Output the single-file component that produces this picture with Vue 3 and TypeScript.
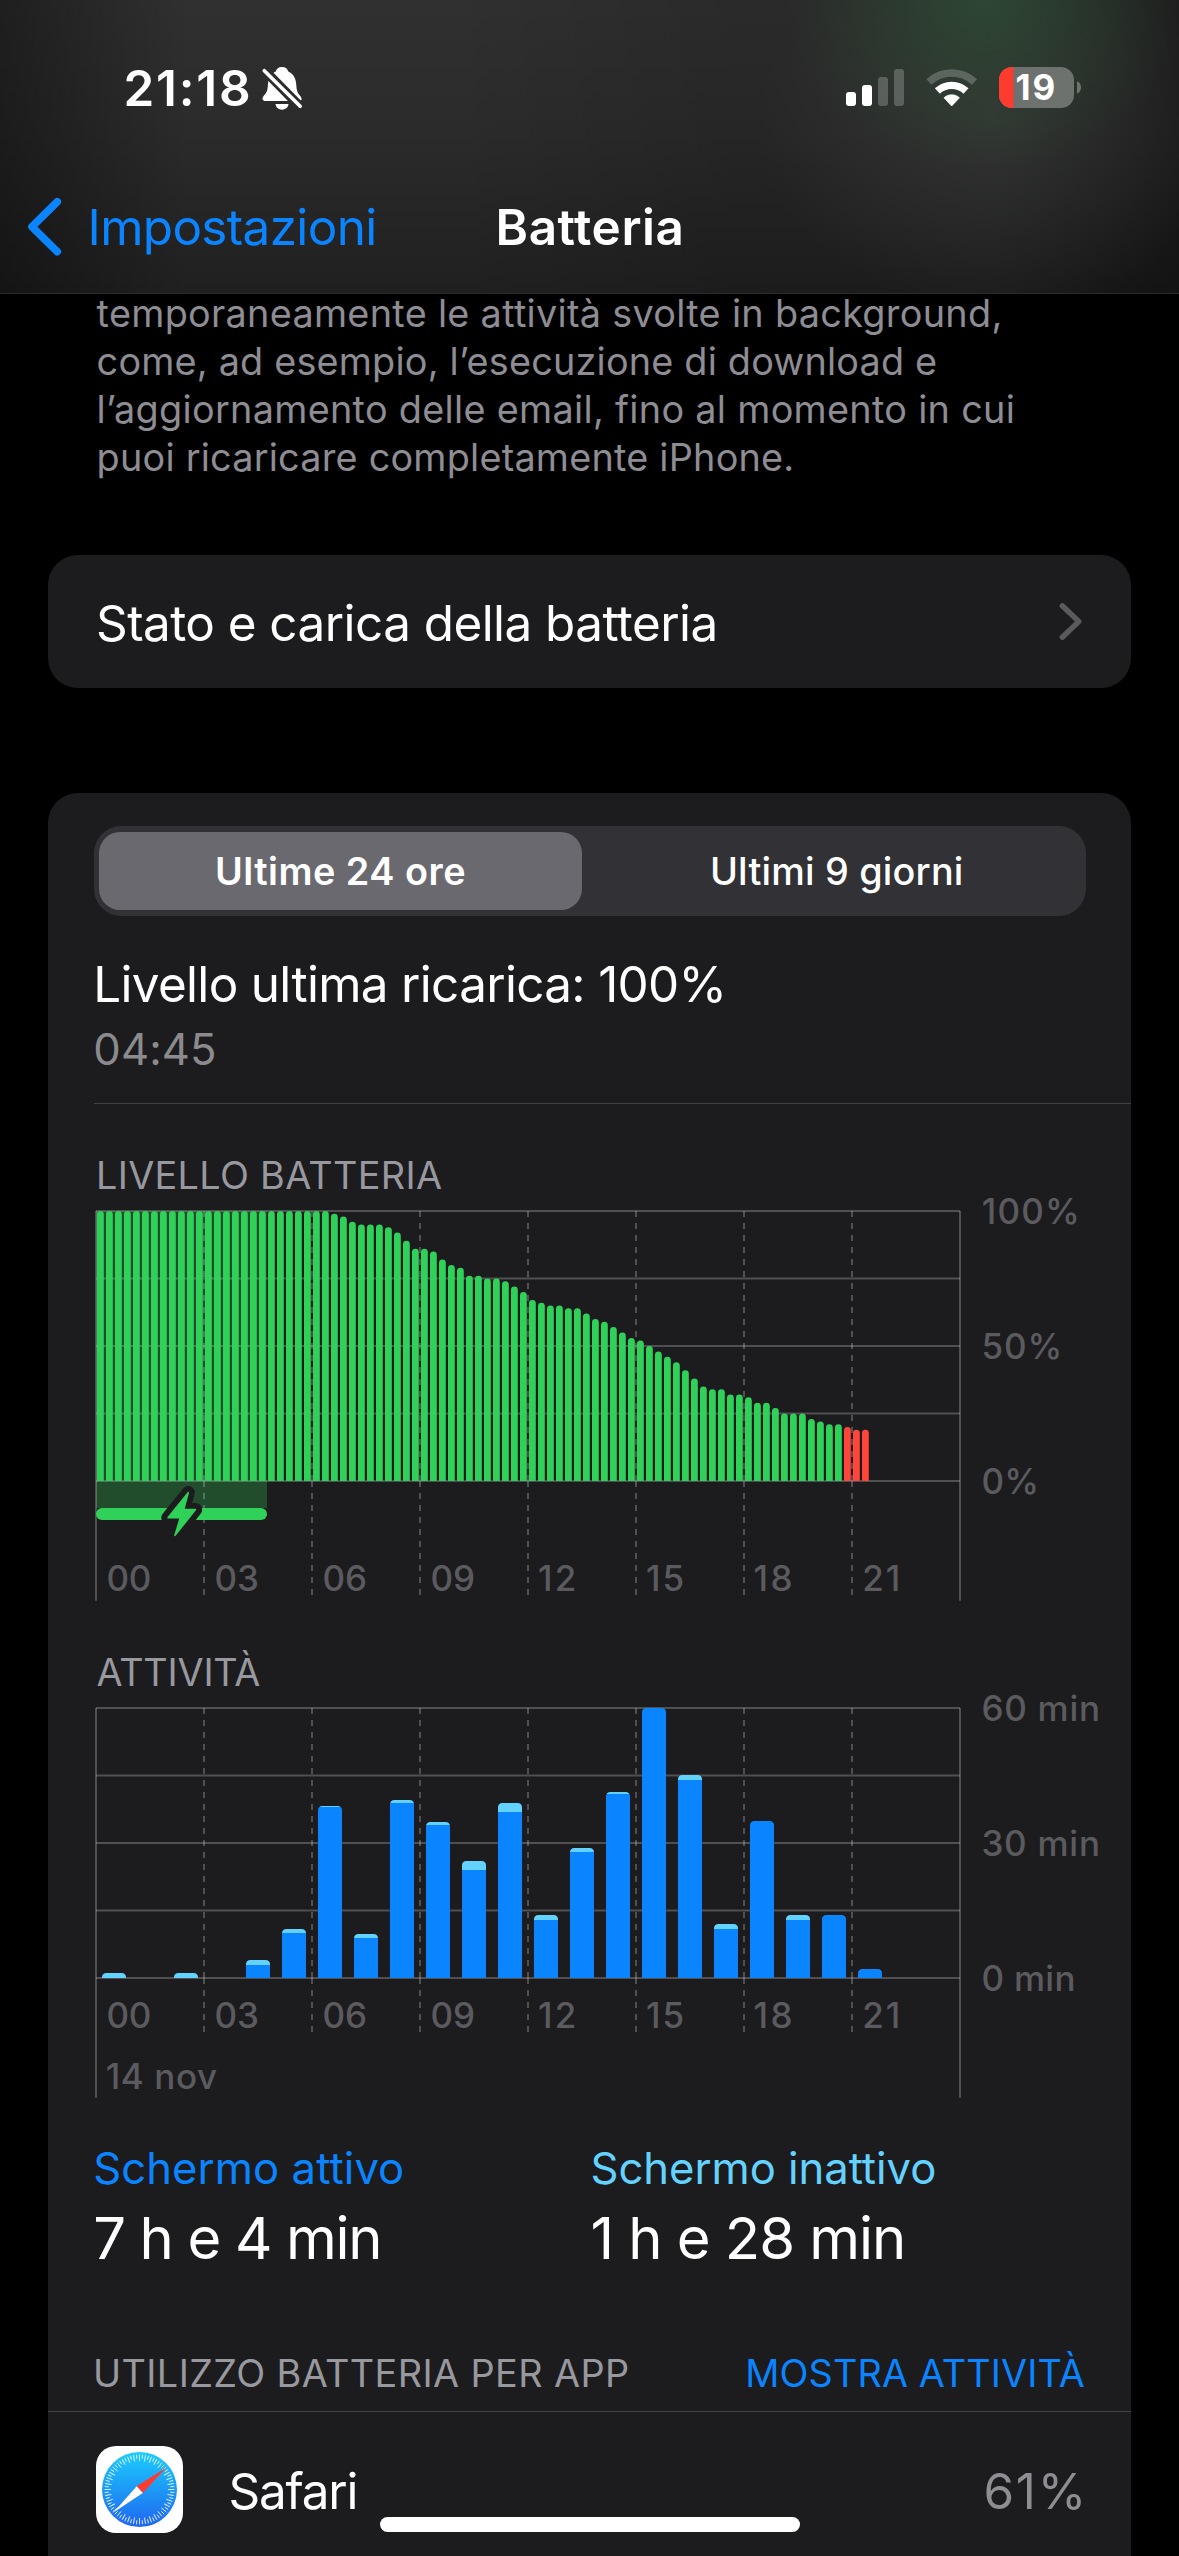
<script setup lang="ts">
interface HourLabel { text: string; x: number; spacing: number }
interface ActivityBar { hour: number; total: number; active: number }

const PLOT_WIDTH = 864
const PLOT_HEIGHT = 270

const hourLabels: HourLabel[] = [
  { text: '00', x: 10.4, spacing: -0.3 },
  { text: '03', x: 118.4, spacing: 0 },
  { text: '06', x: 226.4, spacing: 0 },
  { text: '09', x: 334.4, spacing: 0 },
  { text: '12', x: 442, spacing: 2.2 },
  { text: '15', x: 550, spacing: 2 },
  { text: '18', x: 657.4, spacing: 2.7 },
  { text: '21', x: 766.2, spacing: 2 },
]

const dashed = [1, 2, 3, 4, 5, 6, 7].map((n) => n * 108)
const gridRows = [0, 67.5, 135, 202.5, 270]

// Battery level in percent, one sample every 15 minutes starting at midnight.
const levels: number[] = [
  ...Array<number>(26).fill(100),
  99, 98, 96, 95, 95, 95, 94, 92, 89, 86, 86, 85, 82, 80, 79,
  76, 76, 75, 75, 74, 72, 70, 67, 66, 65, 65, 64, 64, 62, 60, 59,
  57, 55, 53, 52, 50, 48, 46, 44, 41, 38, 35, 34, 34, 32, 32, 31,
  29, 29, 27, 25, 25, 25, 23, 22, 21, 21, 20, 19, 19,
]

const levelBars = levels.map((value, i) => {
  const height = value * 2.7
  return { d: roundedTop(1 + i * 9, PLOT_HEIGHT - height, 6.8, height, 3.4), low: value <= 20 }
})

const activity: ActivityBar[] = [
  { hour: 0, total: 5, active: 0 },
  { hour: 2, total: 5, active: 0 },
  { hour: 4, total: 18, active: 13 },
  { hour: 5, total: 49, active: 45 },
  { hour: 6, total: 172, active: 171 },
  { hour: 7, total: 44, active: 40 },
  { hour: 8, total: 178, active: 175 },
  { hour: 9, total: 156, active: 153 },
  { hour: 10, total: 117, active: 108 },
  { hour: 11, total: 175, active: 166 },
  { hour: 12, total: 63, active: 58 },
  { hour: 13, total: 130, active: 126 },
  { hour: 14, total: 186, active: 184 },
  { hour: 15, total: 270, active: 270 },
  { hour: 16, total: 203, active: 198 },
  { hour: 17, total: 54, active: 49 },
  { hour: 18, total: 157, active: 157 },
  { hour: 19, total: 63, active: 58 },
  { hour: 20, total: 63, active: 63 },
  { hour: 21, total: 9, active: 9 },
]

const activityBars = activity.map((bar) => ({
  ...bar,
  x: 6 + bar.hour * 36,
  d: roundedTop(6 + bar.hour * 36, PLOT_HEIGHT - bar.total, 24, bar.total, 4.5),
}))

const ticks = Array.from({ length: 72 }, (_, i) => ({ angle: i * 5, inner: i % 2 === 0 ? 15 : 12.6 }))

function roundedTop(x: number, y: number, w: number, h: number, r: number): string {
  const c = Math.min(r, h)
  return `M${x} ${y + h}V${y + c}Q${x} ${y} ${x + c} ${y}H${x + w - c}Q${x + w} ${y} ${x + w} ${y + c}V${y + h}Z`
}
</script>

<template>
  <div class="screen">
    <header class="top">
      <div class="status">
        <span class="time">21:18</span>
        <svg class="bell" width="44" height="48" viewBox="260 64 44 48">
          <mask id="bell-gap" maskUnits="userSpaceOnUse" x="255" y="60" width="60" height="60">
            <rect x="255" y="60" width="60" height="60" fill="#fff" />
            <path d="M259 64.8 306 112.6" stroke="#000" stroke-width="9.5" />
          </mask>
          <g mask="url(#bell-gap)" fill="#fff">
            <path d="M282 67c3.6 0 5.6 1.9 6.3 4.6 5.200 2.300 7.700 7.200 8 13.400.3 6 1.200 7.800 3.900 11 2.600 3 1.400 5-1.500 5H265.600c-3.300 0-4-2.600-2-5 3-3.400 4-5 4.300-11 .3-6.500 2.800-11.200 7.800-13.400C276.500 68.900 278.500 67 282 67Z" />
            <path d="M275.500 104h13c-.4 3.600-3.200 5.700-6.500 5.700s-6.100-2.100-6.500-5.700Z" />
          </g>
          <path d="M264.300 70.700 300.200 106.200" stroke="#fff" stroke-width="3.700" stroke-linecap="round" />
        </svg>
        <svg class="indicators" width="240" height="48" viewBox="844 64 240 48">
          <rect x="846" y="92" width="10" height="14" rx="3" fill="#fff" />
          <rect x="862" y="85" width="10" height="21" rx="3" fill="#fff" />
          <rect x="878" y="77" width="10" height="29" rx="3" fill="#fff" fill-opacity=".22" />
          <rect x="894" y="69" width="10" height="37" rx="3" fill="#fff" fill-opacity=".22" />
          <g fill="none" stroke="#fff">
            <path d="M928.900 82.100A33.200 33.200 0 0 1 974.500 82.100" stroke-width="7.500" stroke-opacity=".22" />
            <path d="M937.400 91A20.900 20.900 0 0 1 966 91" stroke-width="7.400" />
          </g>
          <path d="M951.700 106 944 97.800C948.200 93.800 955.200 93.800 959.400 97.800Z" fill="#fff" stroke="#fff" stroke-width=".8" stroke-linejoin="round" />
          <clipPath id="cell"><rect x="999" y="67" width="75" height="41" rx="13" /></clipPath>
          <g clip-path="url(#cell)">
            <rect x="999" y="67" width="75" height="41" fill="#6d726f" />
            <rect x="999" y="67" width="14.400" height="41" fill="#ff3b30" />
          </g>
          <path d="M1077 81.300c2.500.9 4 3.300 4 6.200s-1.500 5.300-4 6.200Z" fill="#6d726f" />
          <text class="charge" x="1015.400" y="100.200">19</text>
        </svg>
      </div>
      <nav class="nav">
        <svg class="back" width="40" height="64" viewBox="25 195 40 64">
          <path d="M57.300 201.700 32 226.700 57.300 251.700" fill="none" stroke="#0a84ff" stroke-width="7.600" stroke-linecap="round" stroke-linejoin="round" />
        </svg>
        <span class="parent">Impostazioni</span>
        <span class="title">Batteria</span>
      </nav>
    </header>

    <main class="content">
      <p class="note">
        <span class="l1">temporaneamente le attività svolte in background,</span>
        <span class="l2">come, ad esempio, l’esecuzione di download e</span>
        <span class="l3">l’aggiornamento delle email, fino al momento in cui</span>
        <span class="l4">puoi ricaricare completamente iPhone.</span>
      </p>

      <section class="card link">
        <span>Stato e carica della batteria</span>
        <svg width="30" height="44" viewBox="1056 599 30 44">
          <path d="M1062.300 604.800 1078.800 620.500 1062.300 636.200" fill="none" stroke="#5a5a5e" stroke-width="5.400" stroke-linecap="round" stroke-linejoin="round" />
        </svg>
      </section>

      <section class="card usage">
        <div class="segmented">
          <span class="segment selected">Ultime 24 ore</span>
          <span class="segment">Ultimi 9 giorni</span>
        </div>
        <div class="last">Livello ultima ricarica: 100%</div>
        <div class="last-time">04:45</div>
        <div class="rule inset"></div>

        <h2 class="caption level">LIVELLO BATTERIA</h2>
        <svg class="chart" width="1083" height="424" viewBox="-48 -30 1083 424">
          <rect x="0" y="0" width="171" height="297" fill="#30d158" fill-opacity=".27" />
          <g class="grid">
            <path v-for="y in gridRows" :key="y" :d="`M0 ${y}H${PLOT_WIDTH}`" />
            <path d="M0 0V389.700M864 0V389.700" />
            <g stroke-dasharray="6 6">
              <path v-for="x in dashed" :key="x" :d="`M${x} 0V270M${x} 270V384`" />
            </g>
          </g>
          <path v-for="(bar, i) in levelBars" :key="i" :d="bar.d" :fill="bar.low ? '#ff453a' : '#30d158'" />
          <rect x="0" y="297" width="171" height="12" rx="6" fill="#30d158" />
          <path d="M92.200 281.500 87.700 298.600H99.700L79.600 324.500 84.900 306.800H71.700Z" fill="#1c1c1e" stroke="#1c1c1e" stroke-width="13" stroke-linejoin="round" />
          <path d="M92.200 281.700 87.700 298.600H99.500L79 324.300 84.300 306.800H72Z" fill="#30d158" stroke="#30d158" stroke-width="1.600" stroke-linejoin="round" />
          <g class="axis">
            <text v-for="h in hourLabels" :key="h.text" :x="h.x" y="380" :letter-spacing="h.spacing">{{ h.text }}</text>
            <text x="885.700" y="13" letter-spacing="1.200">100%</text>
            <text x="885.400" y="148" letter-spacing="1">50%</text>
            <text x="885.400" y="283" letter-spacing=".3">0%</text>
          </g>
        </svg>

        <h2 class="caption activity">ATTIVITÀ</h2>
        <svg class="chart" width="1083" height="424" viewBox="-48 -30 1083 424">
          <g class="grid">
            <path v-for="y in gridRows" :key="y" :d="`M0 ${y}H${PLOT_WIDTH}`" />
            <path d="M0 0V389.700M864 0V389.700" />
            <g stroke-dasharray="6 6">
              <path v-for="x in dashed" :key="x" :d="`M${x} 0V270M${x} 270V324`" />
            </g>
          </g>
          <g v-for="bar in activityBars" :key="bar.hour">
            <clipPath :id="`bar-${bar.hour}`"><path :d="bar.d" /></clipPath>
            <g :clip-path="`url(#bar-${bar.hour})`">
              <rect :x="bar.x" :y="270 - bar.total" width="24" :height="bar.total - bar.active" fill="#64d2ff" />
              <rect :x="bar.x" :y="270 - bar.active" width="24" :height="bar.active" fill="#0a84ff" />
            </g>
          </g>
          <g class="axis">
            <text v-for="h in hourLabels" :key="h.text" :x="h.x" y="320" :letter-spacing="h.spacing">{{ h.text }}</text>
            <text x="9.800" y="381" letter-spacing=".55">14 nov</text>
            <text x="885.400" y="13" letter-spacing=".75">60 min</text>
            <text x="885.400" y="148" letter-spacing=".75">30 min</text>
            <text x="885.400" y="283" letter-spacing=".3">0 min</text>
          </g>
        </svg>

        <div class="totals">
          <div class="total on">
            <span class="name">Schermo attivo</span>
            <span class="value">7 h e 4 min</span>
          </div>
          <div class="total off">
            <span class="name">Schermo inattivo</span>
            <span class="value">1 h e 28 min</span>
          </div>
        </div>

        <div class="apps-head">
          <h2 class="caption apps">UTILIZZO BATTERIA PER APP</h2>
          <span class="toggle">MOSTRA ATTIVITÀ</span>
        </div>
        <div class="rule"></div>
        <div class="app">
          <svg width="87" height="87" viewBox="0 0 87 87">
            <defs>
              <linearGradient id="dial" x1="0" y1="0" x2="0" y2="1">
                <stop offset="0" stop-color="#1bcdfc" />
                <stop offset="1" stop-color="#1f66f0" />
              </linearGradient>
            </defs>
            <rect width="87" height="87" rx="20" fill="#fff" />
            <circle cx="43.500" cy="43.500" r="37.500" fill="url(#dial)" />
            <g stroke="#fff" stroke-width=".9" stroke-opacity=".9">
              <path v-for="t in ticks" :key="t.angle" :d="`M43.500 8.600V${t.inner}`" :transform="`rotate(${t.angle} 43.500 43.500)`" />
            </g>
            <path d="M70.300 21.500 40.700 40.300 46.800 47Z" fill="#ff3b30" />
            <path d="M17.400 66.500 40.700 40.300 46.800 47Z" fill="#fff" />
          </svg>
          <span class="app-name">Safari</span>
          <span class="share">61%</span>
        </div>
      </section>
    </main>
    <div class="home"></div>
  </div>
</template>

<style>
body { margin: 0; background: #000; }
</style>

<style scoped>
.screen {
  position: relative;
  width: 1179px;
  height: 2556px;
  overflow: hidden;
  background: #000;
  color: #fff;
  font-family: Inter, "Liberation Sans", sans-serif;
  font-size: 49.4px;
  font-weight: 400;
  white-space: nowrap;
}
svg { display: block; flex: none; }

/* Translucent header floating over the scrolled list */
.top {
  position: absolute;
  inset: 0 0 auto 0;
  z-index: 1;
  height: 294px;
  box-sizing: border-box;
  border-bottom: 1px solid #2a2a2b;
  background:
    radial-gradient(ellipse 200px 170px at 985px 0, rgba(44, 84, 52, .62), rgba(44, 84, 52, .28) 50%, rgba(44, 84, 52, 0)),
    radial-gradient(ellipse 240px 190px at 1000px 120px, rgba(72, 78, 74, .36), rgba(72, 78, 74, 0)),
    linear-gradient(90deg, rgba(0, 0, 0, .36), rgba(0, 0, 0, 0) 16%, rgba(0, 0, 0, 0) 38%, rgba(0, 0, 0, .12) 62%, rgba(0, 0, 0, .12) 84%, rgba(0, 0, 0, .4)),
    linear-gradient(#303030, #2b2b2b 45%, #202020);
}
.status { display: flex; align-items: center; height: 60px; padding: 58px 0 0 123.5px; }
.time { font-weight: 600; letter-spacing: 1.8px; width: 136.5px; }
.indicators { margin-left: 540px; }
.charge { font-size: 35px; font-weight: 700; letter-spacing: 1.9px; fill: #fff; }
.nav { display: flex; align-items: center; height: 60px; margin-top: 79px; padding-left: 25px; }
.parent { width: 408px; margin-left: 22.5px; color: #0a84ff; letter-spacing: -.63px; }
.title { font-weight: 600; letter-spacing: .59px; }

.content { display: flex; flex-direction: column; padding: 289px 48px 0; }
.note { display: flex; flex-direction: column; margin: 0; color: #8d8d93; font-size: 37.8px; line-height: 48px; }
.note span { padding-left: 48.6px; }
.l1 { letter-spacing: .3px; }
.l2 { letter-spacing: .19px; }
.l3 { letter-spacing: .3px; }
.l4 { letter-spacing: .22px; }

.card { border-radius: 30px; background: #1c1c1e; }
.link {
  display: flex;
  align-items: center;
  justify-content: space-between;
  height: 133px;
  margin-top: 74px;
  padding: 0 45px 0 48px;
  letter-spacing: -.54px;
}
.link span { line-height: 60px; padding-top: 3px; }

.usage { display: flex; flex-direction: column; height: 1900px; margin-top: 105px; padding-top: 33px; }
.segmented {
  display: flex;
  align-items: center;
  box-sizing: border-box;
  width: 992px;
  height: 90px;
  margin-left: 45.5px;
  padding: 0 6px 0 5.500px;
  border-radius: 27px;
  background: #313136;
}
.segment {
  flex: 1;
  text-align: center;
  font-size: 37.8px;
  font-weight: 500;
  line-height: 78px;
  letter-spacing: .2px;
}
.segment.selected {
  flex: 0 0 483px;
  margin-right: 12px;
  border-radius: 21px;
  background: #6a6970;
  font-weight: 600;
  letter-spacing: .5px;
}
.last { margin: 38px 0 0 45.2px; line-height: 60px; letter-spacing: -.66px; }
.last-time { margin: 6px 0 0 45.3px; color: #8b8b8d; font-size: 43.6px; line-height: 60px; letter-spacing: .1px; }
.rule { height: 1px; margin-top: 18px; background: #414144; }
.rule.inset { margin: 23px 0 0 45.5px; }

.caption { margin: 0; color: #98989f; font-size: 37.8px; font-weight: 400; line-height: 40px; }
.level { margin: 51px 0 0 48px; letter-spacing: .32px; }
.activity { margin: 47px 0 0 48.5px; letter-spacing: -.2px; }
.apps { letter-spacing: .4px; }
.chart { margin-top: -14px; }
.grid { fill: none; stroke: #ebebf5; stroke-opacity: .25; stroke-width: 2; }
.axis { fill: #5b5b5f; font-size: 35px; font-weight: 500; }

.totals { display: flex; margin: 37px 0 0 45.2px; }
.total { display: flex; flex-direction: column; width: 497.3px; }
.name { font-size: 43.6px; line-height: 60px; }
.value { margin-top: 4px; font-size: 58px; line-height: 70px; }
.on .name { color: #0a84ff; letter-spacing: .08px; }
.off .name { color: #64d2ff; letter-spacing: -.03px; }
.on .value { letter-spacing: -1.35px; }
.off .value { letter-spacing: -1.05px; }

.apps-head { display: flex; justify-content: space-between; margin-top: 80px; padding: 0 46px 0 45px; }
.toggle { color: #0a84ff; font-size: 37.8px; line-height: 40px; letter-spacing: .11px; }
.app { display: flex; align-items: center; height: 87px; padding: 34px 45px 0 48px; }
.app-name { margin-left: 45.5px; padding-top: 3px; letter-spacing: -1.2px; }
.share { margin-left: auto; padding-top: 3px; margin-right: -2px; color: #8d8d92; letter-spacing: 1.8px; }

.home {
  position: absolute;
  left: 380px;
  top: 2517px;
  z-index: 2;
  width: 420px;
  height: 15px;
  border-radius: 7.5px;
  background: #fff;
}
</style>
